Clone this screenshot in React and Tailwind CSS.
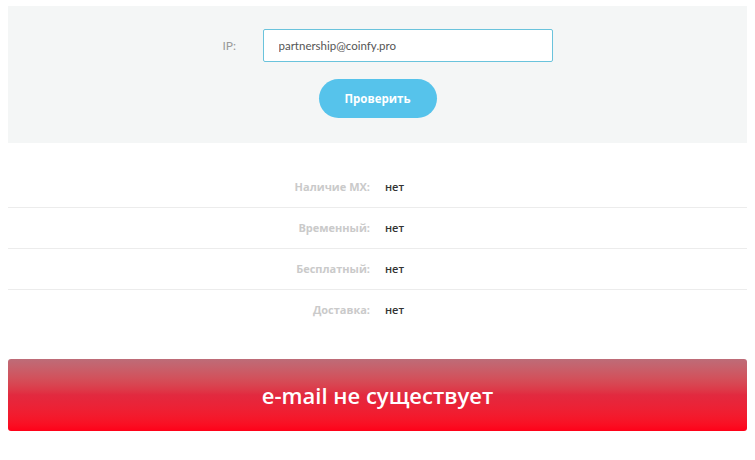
const rows = [
  { label: "Наличие MX:", value: "нет" },
  { label: "Временный:", value: "нет" },
  { label: "Бесплатный:", value: "нет" },
  { label: "Доставка:", value: "нет" },
];

const App = () => {
  return (
    <div className="min-h-screen bg-white px-2 pt-[6px] font-['Lato','Noto_Sans',sans-serif]">
      <div className="h-[137px] bg-[#f4f6f6] pt-[23px] flex flex-col items-center">
        <div className="flex items-center pl-[20px]">
          <label className="w-[40px] text-[12px] text-[#9a9a9a]">IP:</label>
          <input
            type="text"
            defaultValue="partnership@coinfy.pro"
            className="w-[290px] h-[33px] px-[15px] bg-white border border-[#6ac3dc] rounded-[2px] text-[11.5px] text-[#555] outline-none"
          />
        </div>
        <button className="mt-[17px] w-[118px] h-[39px] rounded-full bg-[#56c3eb] text-white text-[11.5px] font-bold font-['Open_Sans',sans-serif]">
          Проверить
        </button>
      </div>

      <div className="mt-[24px] font-['Open_Sans',sans-serif]">
        {rows.map((row, i) => (
          <div
            key={row.label}
            className={`flex items-center h-[41px] ${i < rows.length - 1 ? "border-b border-[#ececec]" : ""}`}
          >
            <div className="w-[362px] text-right text-[11px] font-bold text-[#cacaca]">{row.label}</div>
            <div className="pl-[15px] text-[11px] font-semibold text-[#333]">{row.value}</div>
          </div>
        ))}
      </div>

      <div className="mt-[28px] h-[72px] rounded-[3px] bg-gradient-to-b from-[#bd6c78] via-[#e2293f] to-[#ff0018] flex items-center justify-center">
        <span className="text-white text-[22px] font-semibold font-['Open_Sans',sans-serif]">e-mail не существует</span>
      </div>
    </div>
  );
};

export default App;
